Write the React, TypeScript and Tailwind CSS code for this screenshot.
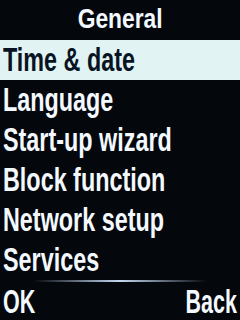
import React from 'react';

const items = ['Time & date', 'Language', 'Start-up wizard', 'Block function', 'Network setup', 'Services'];

export default function App() {
  const selected = 0;

  return (
    <div className="w-[240px] h-[320px] overflow-hidden bg-[#04070b] text-[#f3f9ff] flex flex-col font-['Liberation_Sans',Arial,sans-serif] font-bold">
      <div className="h-[40px] flex items-start justify-center">
        <span className="inline-block text-[28px] leading-[38px] scale-x-[0.815] origin-center">General</span>
      </div>

      <ul className="flex flex-col">
        {items.map((label, i) => (
          <li
            key={label}
            className={
              i === selected
                ? 'h-[40px] pl-[3px] bg-[#e1f3f3] text-[#081423] whitespace-nowrap'
                : 'h-[40px] pl-[3px] whitespace-nowrap'
            }
          >
            <span className="inline-block text-[33px] leading-[40px] scale-x-[0.708] origin-left">{label}</span>
          </li>
        ))}
      </ul>

      <div className="h-[2px] mx-[33px] bg-gradient-to-r from-transparent via-[#c4d8f2] to-transparent" />

      <div className="h-[38px] flex justify-between px-[3px] whitespace-nowrap">
        <span className="inline-block text-[33px] leading-[40px] scale-x-[0.65] origin-left">OK</span>
        <span className="inline-block text-[33px] leading-[40px] scale-x-[0.65] origin-right">Back</span>
      </div>
    </div>
  );
}
